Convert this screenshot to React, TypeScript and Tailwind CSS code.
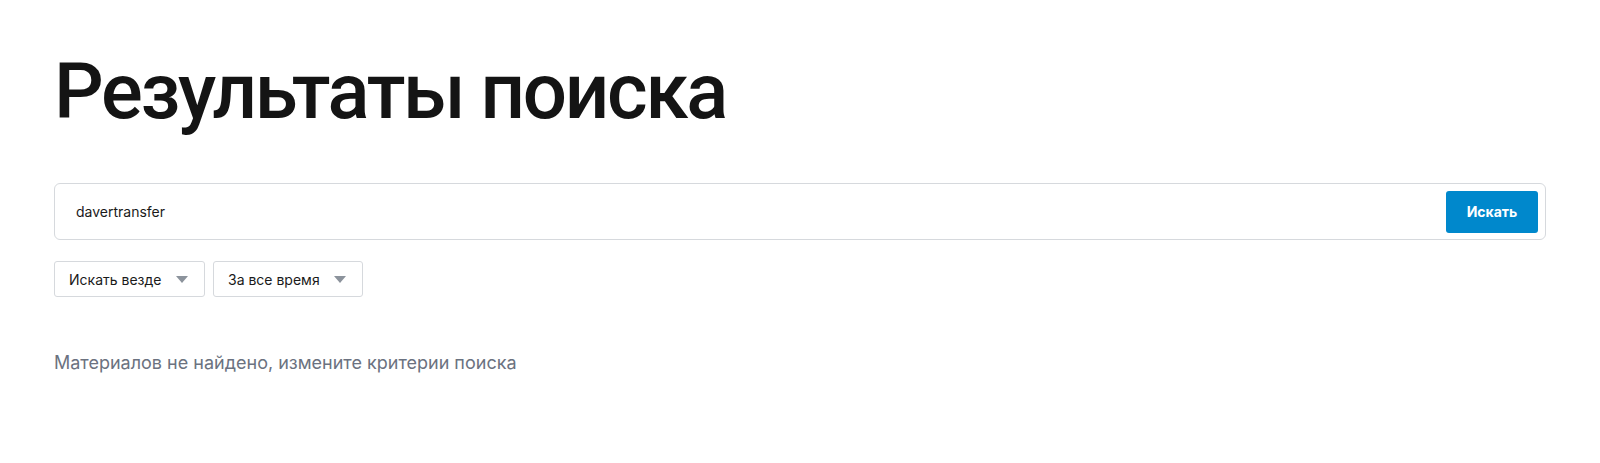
import React from "react";

function Caret() {
  return (
    <svg width="12" height="7" viewBox="0 0 12 7" className="shrink-0">
      <path d="M0 0 L12 0 L6 7 Z" fill="#8c939c" />
    </svg>
  );
}

function Select({ label, width }: { label: string; width: string }) {
  return (
    <div
      className={`flex h-[36px] items-center justify-between rounded-[3px] border border-[#d6d9dd] bg-white pl-[14px] pr-[16px] text-[14px] text-[#1a1a1a] ${width}`}
    >
      <span>{label}</span>
      <Caret />
    </div>
  );
}

export default function App() {
  return (
    <div className="min-h-[463px] bg-white px-[54px] pt-[52px] font-['Inter','Noto_Sans',sans-serif]">
      <h1 className="font-['Roboto','Inter',sans-serif] text-[78px] font-medium leading-[80px] tracking-[-2.3px] text-[#141414]">
        Результаты поиска
      </h1>
      <div className="mt-[51px] flex h-[57px] items-center rounded-[6px] border border-[#d6d9dd] bg-white pl-[21px] pr-[7px]">
        <span className="flex-1 text-[14px] text-[#1a1a1a]">davertransfer</span>
        <button className="h-[42px] w-[92px] rounded-[3px] bg-[#0088cc] text-[14px] font-bold text-white">
          Искать
        </button>
      </div>
      <div className="mt-[21px] flex gap-[8px]">
        <Select label="Искать везде" width="w-[151px]" />
        <Select label="За все время" width="w-[150px]" />
      </div>
      <p className="mt-[53px] text-[18px] leading-[26px] text-[#6b7280]">
        Материалов не найдено, измените критерии поиска
      </p>
    </div>
  );
}
